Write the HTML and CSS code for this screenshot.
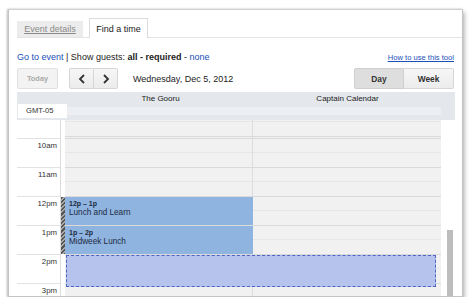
FILE: index.html
```html
<!DOCTYPE html>
<html lang="en">
<head>
	<meta charset="UTF-8">
	<title>Find a time</title>
	<link rel="stylesheet" href="styles.css">
</head>
<body>
	<div class="panel">
		<div class="tabs">
			<span class="tab tabOff">Event details</span>
			<span class="tab tabOn">Find a time</span>
		</div>

		<div class="links">
			<div class="linksLeft">
				<a href="#">Go to event</a> | Show guests: <b>all - required</b> - <a href="#">none</a>
			</div>
			<a href="#" class="howTo">How to use this tool</a>
		</div>

		<div class="toolbar">
			<span class="btn btnToday">Today</span>
			<div class="btnGroup">
				<span class="btn btnArrow">
					<svg width="8" height="10" viewBox="0 0 8 10"><path d="M6 1 L2 5 L6 9" fill="none" stroke="#333" stroke-width="1.8"/></svg>
				</span>
				<span class="btn btnArrow">
					<svg width="8" height="10" viewBox="0 0 8 10"><path d="M2 1 L6 5 L2 9" fill="none" stroke="#333" stroke-width="1.8"/></svg>
				</span>
			</div>
			<span class="dateText">Wednesday, Dec 5, 2012</span>
			<div class="btnGroup viewGroup">
				<span class="btn btnView btnSel">Day</span>
				<span class="btn btnView">Week</span>
			</div>
		</div>

		<div class="calHead">
			<div class="headLeft">
				<div class="tz">GMT-05</div>
			</div>
			<div class="headCols">
				<div class="headNames">
					<span>The Gooru</span>
					<span>Captain Calendar</span>
				</div>
				<div class="allDay"></div>
			</div>
		</div>

		<div class="calBody">
			<div class="times">
				<div class="timeRow firstRow"></div>
				<div class="timeRow">10am</div>
				<div class="timeRow">11am</div>
				<div class="timeRow">12pm</div>
				<div class="timeRow">1pm</div>
				<div class="timeRow">2pm</div>
				<div class="timeRow">3pm</div>
			</div>
			<div class="marker">
				<div class="hatch"></div>
			</div>
			<div class="cols">
				<div class="col colFirst"></div>
				<div class="col"></div>

				<div class="event ev1">
					<b>12p – 1p</b>
					<span>Lunch and Learn</span>
				</div>
				<div class="event ev2">
					<b>1p – 2p</b>
					<span>Midweek Lunch</span>
				</div>
				<div class="pick"></div>
			</div>
			<div class="scrollArea">
				<div class="scrollThumb"></div>
			</div>
		</div>
	</div>
</body>
</html>
```

FILE: styles.css
```css
*{
	margin: 0;
	padding: 0;
	box-sizing: border-box;
}
body{
	background: #fff;
	font-family: "Liberation Sans", Arial, sans-serif;
	color: #222;
}
a{
	color: #1a4fb8;
	text-decoration: none;
}

.panel{
	width: 455px;
	height: 288px;
	margin: 9px 0 0 8px;
	border: 1px solid #c4c4c4;
	border-top-color: #d0d0d0;
	box-shadow: -1px 0 2px rgba(0,0,0,0.25), 2px 3px 4px rgba(0,0,0,0.25);
	padding: 8px 0 0 8px;
	overflow: hidden;
	display: flex;
	flex-direction: column;
}

/* tabs */
.tabs{
	height: 20px;
	display: flex;
	align-items: flex-end;
	gap: 6px;
	border-bottom: 1px solid #e4e4e4;
	margin-right: -1px;
}
.tab{
	font-size: 9px;
	line-height: 15px;
	white-space: nowrap;
	text-align: center;
}
.tabOff{
	width: 66px;
	height: 16px;
	background: #ececec;
	color: #8a8a8a;
	text-decoration: underline;
	padding-top: 1px;
}
.tabOn{
	width: 59px;
	height: 20px;
	background: #fff;
	border: 1px solid #dcdcdc;
	border-bottom: none;
	margin-bottom: -1px;
	padding-top: 3px;
	color: #222;
}

/* links row */
.links{
	display: flex;
	justify-content: space-between;
	align-items: baseline;
	margin-top: 13px;
	padding-right: 8px;
	height: 14px;
}
.linksLeft{
	font-size: 9px;
	line-height: 12px;
}
.howTo{
	font-size: 7.6px;
	text-decoration: underline;
}

/* toolbar */
.toolbar{
	display: flex;
	align-items: center;
	margin-top: 3px;
	height: 21px;
	padding-right: 8px;
}
.btn{
	display: flex;
	align-items: center;
	justify-content: center;
	height: 21px;
	border: 1px solid #d6d6d6;
	border-radius: 2px;
	background: linear-gradient(#f6f6f6, #ececec);
	font-size: 8px;
	font-weight: bold;
	color: #333;
}
.btnToday{
	width: 41px;
	font-size: 7.4px;
	color: #aaa;
	background: #f3f3f3;
	border-color: #e0e0e0;
}
.btnGroup{
	display: flex;
}
.btnGroup .btn:first-child{
	border-radius: 2px 0 0 2px;
}
.btnGroup .btn:last-child{
	border-radius: 0 2px 2px 0;
	border-left: none;
}
.btnGroup:first-of-type{
	margin-left: 11px;
}
.btnArrow{
	width: 25px;
}
.btnArrow:last-child{
	width: 24px;
}
.dateText{
	font-size: 9px;
	margin-left: 15px;
	flex: 1;
}
.btnView{
	width: 50px;
	font-size: 8.4px;
}
.btnSel{
	background: #dedede;
	border-color: #cfcfcf;
}

/* calendar head */
.calHead{
	display: flex;
	margin-top: 3px;
	height: 28px;
	background: #e4e7eb;
	margin-right: 7px;
}
.headLeft{
	width: 50px;
	display: flex;
	align-items: flex-end;
	padding-bottom: 2px;
}
.tz{
	width: 50px;
	height: 14px;
	margin-left: 1px;
	background: #fff;
	font-size: 7.6px;
	line-height: 14px;
	padding-left: 8px;
	color: #333;
}
.headCols{
	flex: 1;
	display: flex;
	flex-direction: column;
}
.headNames{
	display: flex;
	height: 15px;
	font-size: 8px;
	line-height: 14px;
	color: #222;
}
.headNames span{
	text-align: center;
	width: 187px;
}
.allDay{
	height: 8px;
	margin-right: 14px;
	background: #eceef1;
}

/* calendar body */
.calBody{
	flex: 1;
	display: flex;
	overflow: hidden;
}
.times{
	width: 44px;
	border-right: 1px solid #dcdcdc;
	background: #fff;
}
.timeRow{
	height: 29px;
	border-top: 1px solid #e2e2e2;
	font-size: 7.8px;
	text-align: right;
	padding: 1px 3px 0 0;
	line-height: 11px;
	color: #333;
}
.firstRow{
	height: 18px;
	border-top: none;
}
.marker{
	width: 4px;
	position: relative;
}
.hatch{
	position: absolute;
	left: 0;
	top: 77px;
	width: 5px;
	height: 57px;
	background: repeating-linear-gradient(135deg, #555 0 1.5px, #aaa 1.5px 3px);
}
.cols{
	display: flex;
	position: relative;
	width: 376px;
}
.col{
	width: 188px;
	background:
		repeating-linear-gradient(to bottom, #dadada 0 1px, #f1f1f1 1px 14px, #e6e6e6 14px 15px, #f1f1f1 15px 29px);
	background-position: 0 18px;
	background-color: #f1f1f1;
}
.colFirst{
	border-right: 1px solid #dcdcdc;
}
.event{
	position: absolute;
	left: 0;
	width: 188px;
	height: 28px;
	background: #8fb4e0;
	padding: 2px 4px;
	display: flex;
	flex-direction: column;
	color: #1d2a40;
}
.event b{
	font-size: 7px;
	line-height: 9px;
}
.event span{
	font-size: 8.2px;
	line-height: 9px;
}
.ev1{
	top: 77px;
}
.ev2{
	top: 106px;
}
.pick{
	position: absolute;
	left: 1px;
	top: 135px;
	width: 370px;
	height: 32px;
	background: #b6c3ed;
	border: 1.5px dashed #4f63c6;
}
.scrollArea{
	flex: 1;
	background: #fff;
	position: relative;
}
.scrollThumb{
	position: absolute;
	left: 6px;
	top: 110px;
	width: 6px;
	height: 80px;
	background: #bdbdbd;
}
```
